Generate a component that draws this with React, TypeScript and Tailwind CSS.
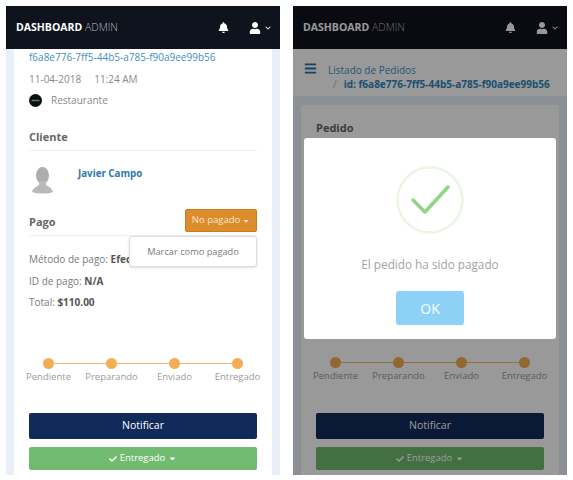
import React from 'react';
import { FaBars, FaBell, FaCaretDown, FaCheck, FaChevronDown, FaUser } from 'react-icons/fa';

const steps = ['Pendiente', 'Preparando', 'Enviado', 'Entregado'];

const NavBar: React.FC = () => (
  <header className="h-[43px] shrink-0 bg-[#0f131d] flex items-center pl-[10px] pr-[9px] text-white">
    <span className="text-[10.5px]">
      <span className="font-bold">DASHBOARD</span>{' '}
      <span className="font-light text-[#b4b8bf]">ADMIN</span>
    </span>
    <FaBell className="ml-auto mr-[20px] text-[11px]" />
    <FaUser className="text-[12px]" />
    <FaChevronDown className="ml-[4px] text-[6px] text-[#d5d7da]" />
  </header>
);

const Stepper: React.FC = () => (
  <div>
    <div className="flex items-center mx-[14px]">
      {steps.map((step, index) => (
        <React.Fragment key={step}>
          {index > 0 && <div className="flex-1 h-[1px] bg-[#f5ba6b]" />}
          <div className="w-[11px] h-[11px] rounded-full bg-[#f4ad54] shrink-0" />
        </React.Fragment>
      ))}
    </div>
    <div className="grid grid-cols-4 -mx-[12px] text-[9.5px] leading-[16px] text-[#9b9b9b] text-center">
      {steps.map((step) => (
        <span key={step}>{step}</span>
      ))}
    </div>
  </div>
);

const Actions: React.FC = () => (
  <div className="flex flex-col gap-[8px]">
    <button className="h-[26px] rounded-[2px] bg-[#102a5a] text-white text-[10.5px]">Notificar</button>
    <button className="h-[23px] rounded-[2px] bg-[#70bb6f] text-white text-[9.5px] flex items-center justify-center gap-[3px]">
      <FaCheck className="text-[8px]" />
      Entregado
      <FaCaretDown className="text-[9px]" />
    </button>
  </div>
);

const Avatar: React.FC = () => (
  <svg width="21" height="27" viewBox="0 0 21 27" className="shrink-0">
    <ellipse cx="10.5" cy="8.5" rx="6.5" ry="8.5" fill="#adadad" />
    <path d="M7 14 L14 14 L14 18 C17 20 20 21 21 25 C15 27 6 27 0 25 C1 21 4 20 7 18 Z" fill="#b9b9b9" />
  </svg>
);

const OrderScreen: React.FC = () => (
  <div className="w-[274px] h-[469px] flex flex-col overflow-hidden">
    <NavBar />
    <main className="flex-1 bg-[#e9eff6] px-[8px]">
      <div className="h-full bg-white px-[15px] pt-[1px] text-[10px]">
        <a className="block leading-[14px] text-[#3f8fbf]">f6a8e776-7ff5-44b5-a785-f90a9ee99b56</a>
        <p className="leading-[14px] text-[#8a8a8a] mt-[8px]">11-04-2018&nbsp;&nbsp;&nbsp;&nbsp;&nbsp;11:24 AM</p>
        <div className="flex items-center gap-[9px] mt-[7px] leading-[14px] text-[#8a8a8a]">
          <svg width="13" height="13" viewBox="0 0 13 13" className="shrink-0">
            <circle cx="6.5" cy="6.5" r="6.5" fill="#0b0f14" />
            <rect x="2.5" y="5.8" width="8" height="1.4" fill="#5d7f63" />
          </svg>
          Restaurante
        </div>

        <h3 className="text-[11px] leading-[16px] font-bold text-[#666] mt-[22px] pb-[5px] border-b border-[#eeeeee]">Cliente</h3>
        <div className="flex items-start gap-[25px] mt-[16px] ml-[3px] h-[28px]">
          <Avatar />
          <a className="text-[9.75px] leading-[14px] font-bold text-[#2f78ab]">Javier Campo</a>
        </div>

        <div className="relative mt-[14px] border-b border-[#eeeeee] h-[27px] flex items-start justify-between">
          <h3 className="text-[11px] leading-[16px] font-bold text-[#666] mt-[5px]">Pago</h3>
          <button className="h-[23px] w-[72px] rounded-[2px] bg-[#dd8c2a] border border-[#c97c22] text-[#f7e8d3] text-[9.5px] flex items-center justify-center gap-[2px]">
            No pagado
            <FaCaretDown className="text-[8px]" />
          </button>
          <div className="absolute right-0 top-[27px] w-[128px] h-[31px] z-10 bg-white border border-[#dddddd] rounded-[3px] shadow-sm text-[9.25px] text-[#7d7d7d] flex items-center justify-center">
            Marcar como pagado
          </div>
        </div>

        <div className="leading-[14px] text-[#7a7a7a] mt-[16px] flex flex-col gap-[7.5px]">
          <p className="w-[100px] overflow-hidden whitespace-nowrap">Método de pago: <b className="text-[#555]">Efectivo</b></p>
          <p>ID de pago: <b className="text-[#555]">N/A</b></p>
          <p>Total: <b className="text-[#555]">$110.00</b></p>
        </div>

        <div className="mt-[49px]">
          <Stepper />
        </div>
        <div className="mt-[28px]">
          <Actions />
        </div>
      </div>
    </main>
  </div>
);

const PaidScreen: React.FC = () => (
  <div className="relative w-[274px] h-[469px] flex flex-col overflow-hidden">
    <NavBar />
    <div className="h-[47px] shrink-0 bg-white flex items-start pl-[11px] pt-[14px] gap-[11px]">
      <FaBars className="text-[#2d6da3] text-[13px] -mt-[1px]" />
      <div className="text-[10px] leading-[14px] text-[#3f8fbf]">
        <div>Listado de Pedidos</div>
        <div className="whitespace-nowrap">
          <span className="text-[#bbb] ml-[5px] mr-[7px]">/</span>
          <b className="text-[#2f86b8]">id: f6a8e776-7ff5-44b5-a785-f90a9ee99b56</b>
        </div>
      </div>
    </div>
    <main className="flex-1 bg-[#e9eff6] px-[8px] pt-[9px]">
      <div className="h-full bg-white px-[15px] pt-[15px]">
        <h3 className="text-[11px] leading-[16px] font-bold text-[#666]">Pedido</h3>
        <div className="h-[221px]" />
        <Stepper />
        <div className="mt-[29px]">
          <Actions />
        </div>
      </div>
    </main>

    <div className="absolute inset-0 bg-[rgba(0,0,0,0.4)]" />

    <div className="absolute left-[11px] top-[132px] w-[252px] h-[201px] bg-white rounded-[3px] flex flex-col items-center">
      <svg width="68" height="68" viewBox="0 0 68 68" className="mt-[28px]">
        <circle cx="34" cy="34" r="32.5" fill="none" stroke="#e9f6e3" strokeWidth="2.5" />
        <path d="M17 34 L29 46 L52 21" fill="none" stroke="#8fd583" strokeWidth="3.5" strokeLinecap="round" strokeLinejoin="round" />
      </svg>
      <p className="mt-[21px] text-[11.75px] leading-[18px] text-[#a4a4a4]">El pedido ha sido pagado</p>
      <button className="mt-[18px] w-[68px] h-[34px] rounded-[3px] bg-[#8dd2f6] text-white text-[14px]">OK</button>
    </div>
  </div>
);

export default function App() {
  return (
    <div className="w-[573px] h-[480px] bg-white pt-[6px] pl-[6px] flex gap-[13px] font-['Open_Sans',sans-serif]">
      <OrderScreen />
      <PaidScreen />
    </div>
  );
}
